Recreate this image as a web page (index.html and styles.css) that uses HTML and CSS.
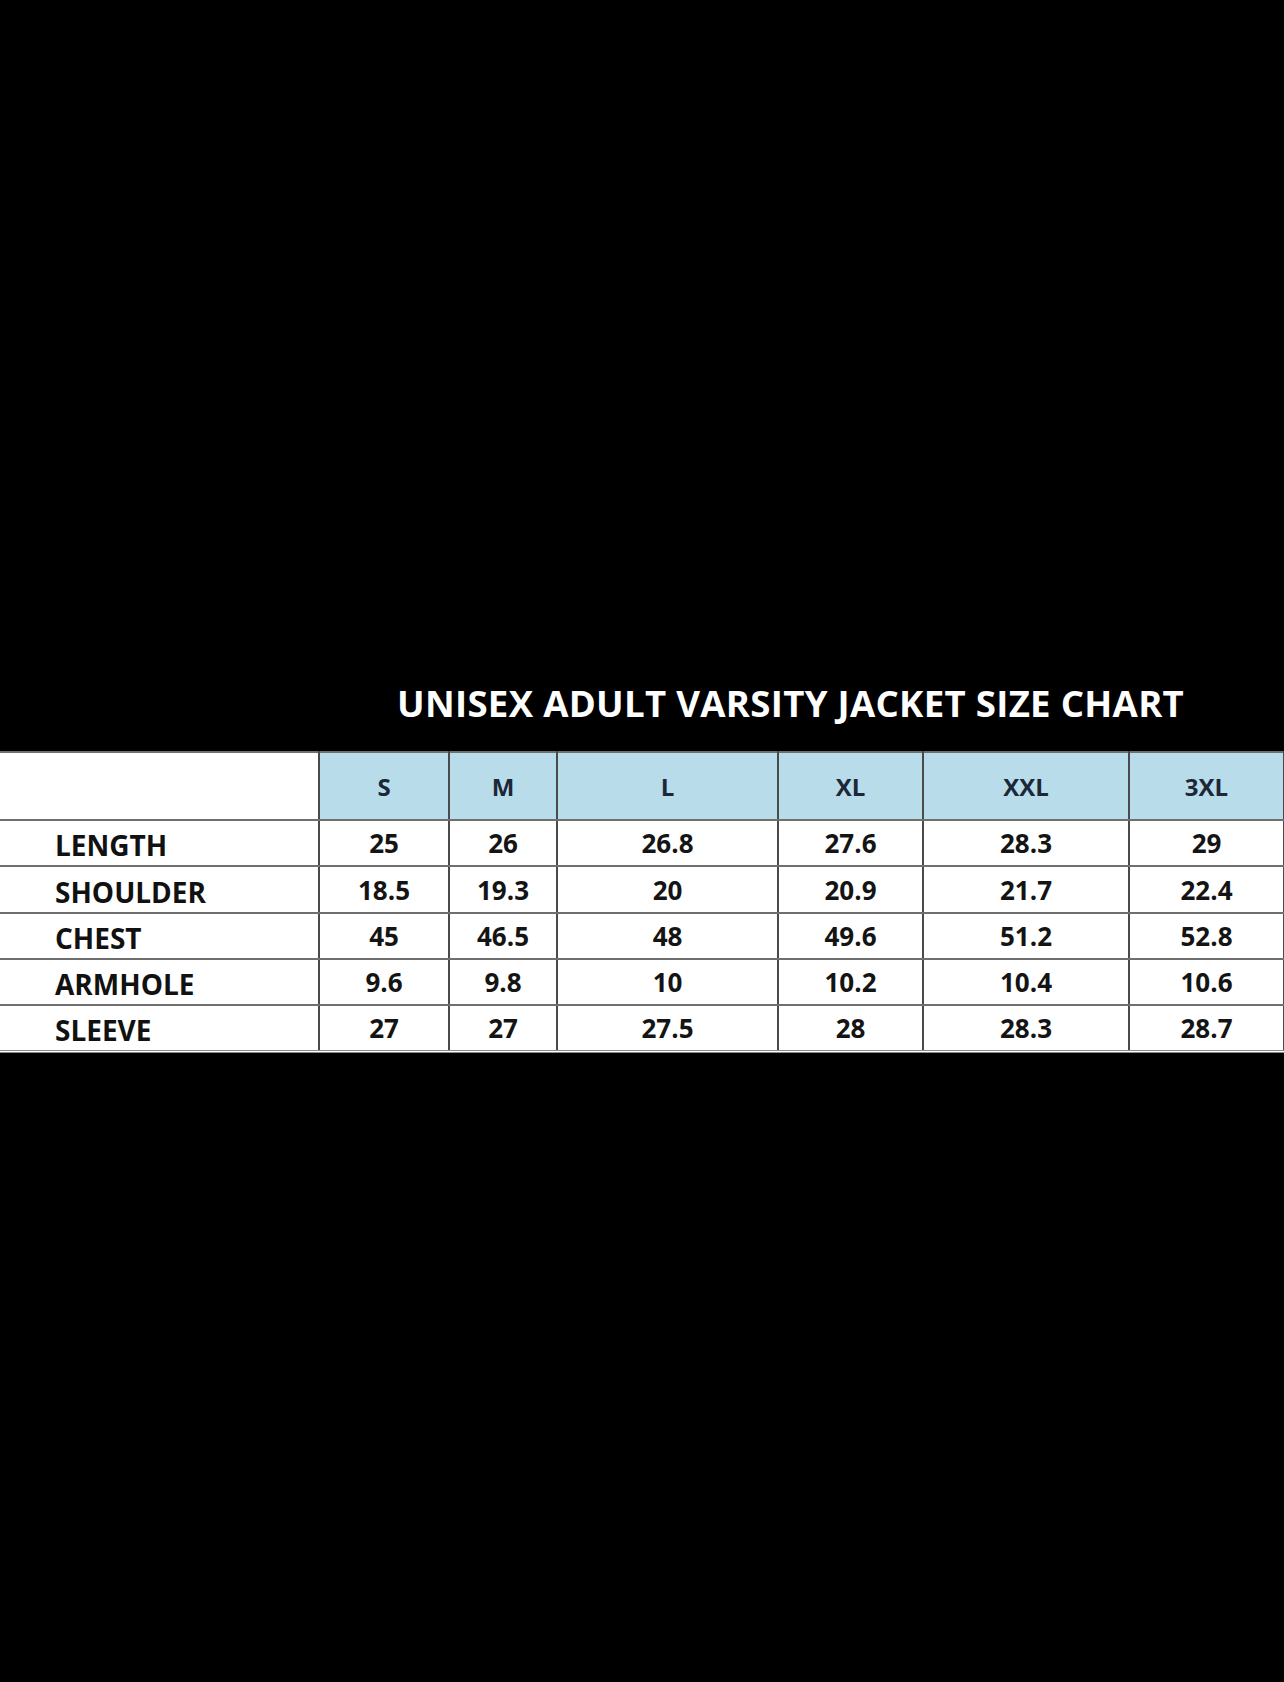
FILE: index.html
```html
<!DOCTYPE html>
<html lang="en">
<head>
<meta charset="utf-8">
<title>Unisex Adult Varsity Jacket Size Chart</title>
<link rel="stylesheet" href="styles.css">
</head>
<body>
<main class="page">
  <h1 class="title">UNISEX ADULT VARSITY JACKET SIZE CHART</h1>
  <table class="chart">
    <colgroup>
      <col class="c-label">
      <col class="c-s">
      <col class="c-m">
      <col class="c-l">
      <col class="c-xl">
      <col class="c-xxl">
      <col class="c-3xl">
    </colgroup>
    <thead>
      <tr class="head-row">
        <th class="corner"></th>
        <th class="size">S</th>
        <th class="size">M</th>
        <th class="size">L</th>
        <th class="size">XL</th>
        <th class="size">XXL</th>
        <th class="size">3XL</th>
      </tr>
    </thead>
    <tbody>
      <tr class="r1">
        <th class="label">LENGTH</th>
        <td>25</td><td>26</td><td>26.8</td><td>27.6</td><td>28.3</td><td>29</td>
      </tr>
      <tr class="r2">
        <th class="label">SHOULDER</th>
        <td>18.5</td><td>19.3</td><td>20</td><td>20.9</td><td>21.7</td><td>22.4</td>
      </tr>
      <tr class="r3">
        <th class="label">CHEST</th>
        <td>45</td><td>46.5</td><td>48</td><td>49.6</td><td>51.2</td><td>52.8</td>
      </tr>
      <tr class="r4">
        <th class="label">ARMHOLE</th>
        <td>9.6</td><td>9.8</td><td>10</td><td>10.2</td><td>10.4</td><td>10.6</td>
      </tr>
      <tr class="r5">
        <th class="label">SLEEVE</th>
        <td>27</td><td>27</td><td>27.5</td><td>28</td><td>28.3</td><td>28.7</td>
      </tr>
    </tbody>
  </table>
</main>
</body>
</html>
```

FILE: styles.css
```css
html, body {
  margin: 0;
  padding: 0;
  background: #000;
}

.page {
  min-height: 1682px;
  padding-top: 681px;
  box-sizing: border-box;
  background: #000;
  font-family: "Open Sans", "DejaVu Sans", sans-serif;
}

.title {
  margin: 0 0 26px 0;
  padding-left: 397px;
  font-size: 36.6px;
  line-height: 44px;
  font-weight: 700;
  color: #fff;
  letter-spacing: 0.3px;
  white-space: nowrap;
}

.chart {
  width: 1284px;
  border-collapse: collapse;
  table-layout: fixed;
  background: #fff;
  color: #111;
}

.c-label { width: 319px; }
.c-s { width: 130px; }
.c-m { width: 108px; }
.c-l { width: 221px; }
.c-xl { width: 145px; }
.c-xxl { width: 206px; }
.c-3xl { width: 155px; }

.chart th,
.chart td {
  padding: 0;
  border-top: 2px solid #6f6f6f;
  border-bottom: 2px solid #6f6f6f;
  border-left: 2px solid #4a4a4a;
  border-right: 2px solid #4a4a4a;
  text-align: center;
  vertical-align: middle;
}

.chart th:first-child,
.chart td:first-child {
  border-left: none;
}

.head-row { height: 68px; }
.r1 { height: 46px; }
.r2 { height: 47px; }
.r3 { height: 46px; }
.r4 { height: 46px; }
.r5 { height: 46px; }

.chart .corner {
  background: #fff;
}

.chart .size {
  background: #b8dcea;
  color: #1c2737;
  font-size: 24px;
  font-weight: 700;
}

.chart .label {
  text-align: left;
  padding-left: 55px;
  padding-top: 4px;
  font-size: 28px;
  font-weight: 700;
  color: #111;
}

.chart td {
  font-size: 26px;
  font-weight: 700;
  color: #141414;
}

.chart .r5 th,
.chart .r5 td {
  border-bottom: 3px double #8a8a8a;
}
```
